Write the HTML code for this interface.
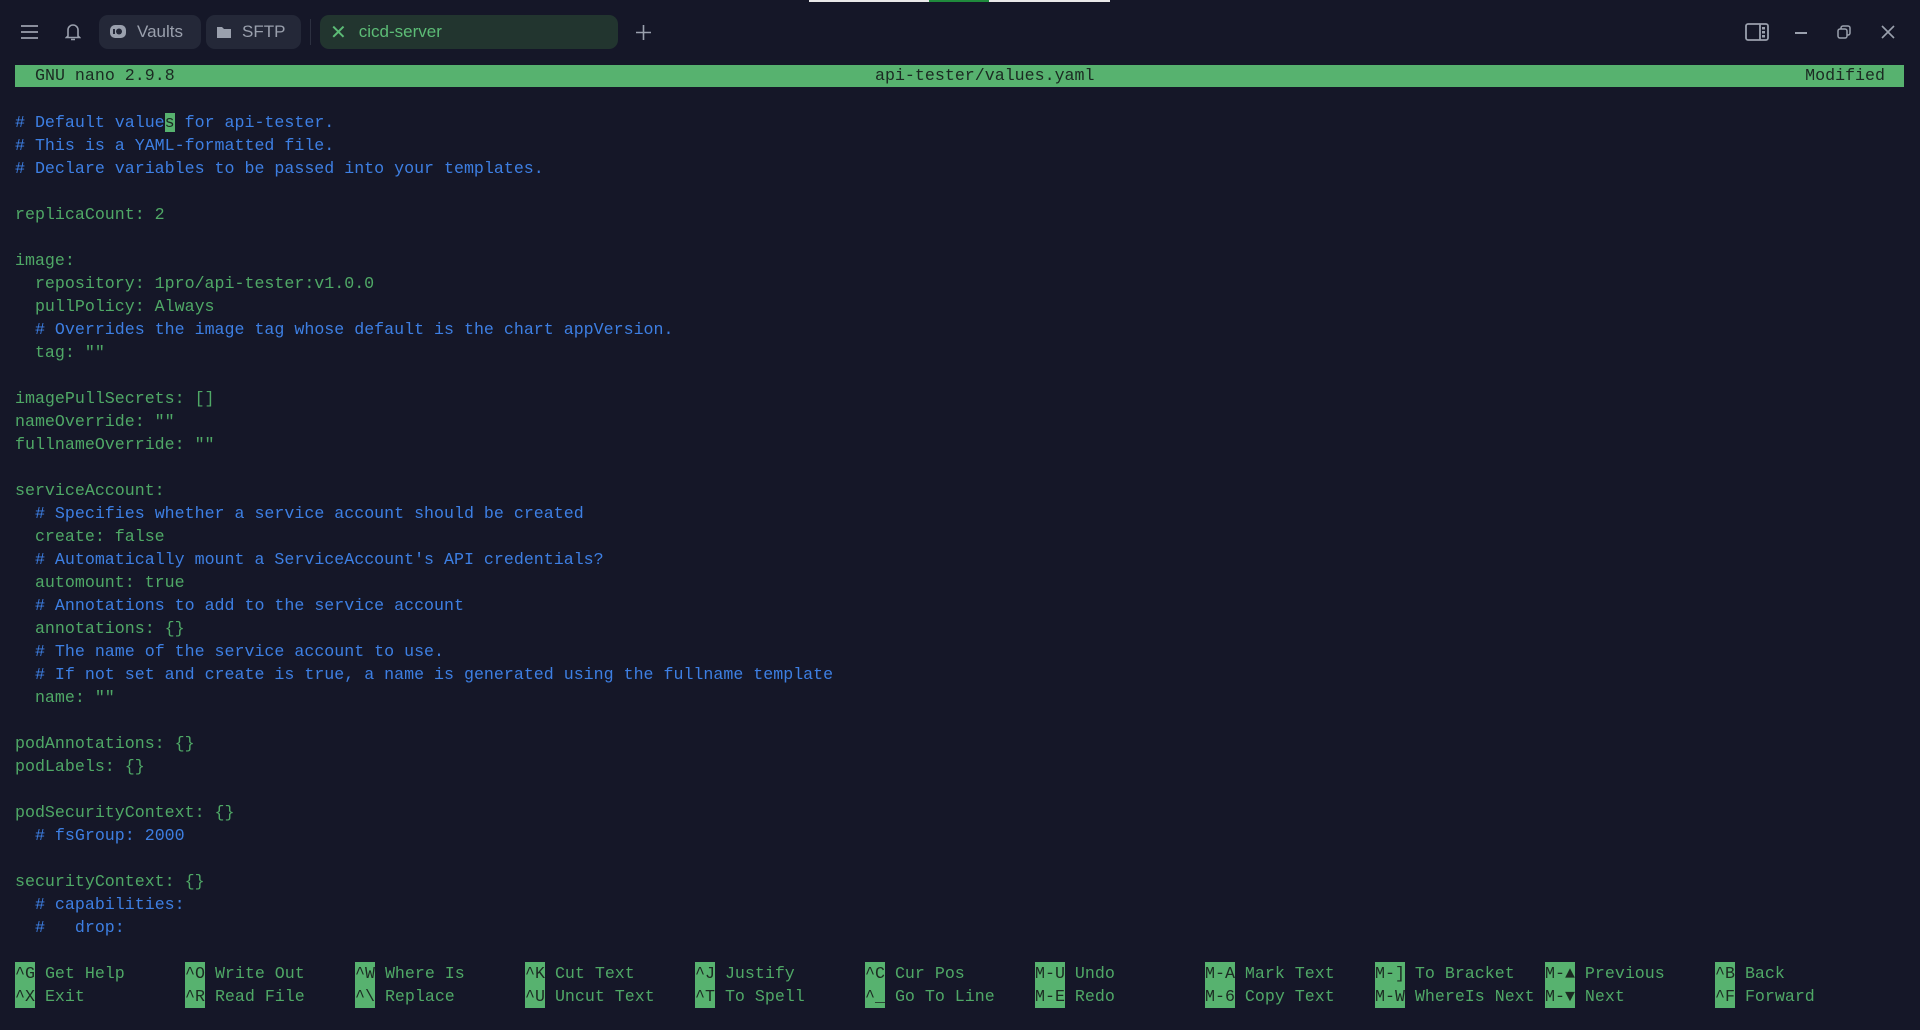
<!DOCTYPE html>
<html><head><meta charset="utf-8"><style>
*{margin:0;padding:0;box-sizing:border-box}
body{width:1920px;height:1030px;background:#151728;overflow:hidden;position:relative;font-family:"Liberation Sans",sans-serif}
.topline{position:absolute;top:0;left:809px;width:301px;height:2px;background:#e8e8e8}
.topline i{position:absolute;left:120px;width:60px;height:2px;background:#1f8a3c}
.tab{position:absolute;top:15px;height:34px;border-radius:9px;background:#242838;color:#9aa0ad;font-size:17px;display:flex;align-items:center}
.ic{position:absolute}
.mono{font-family:"Liberation Mono",monospace;font-size:16.64px;line-height:23px;white-space:pre}
.bar{position:absolute;left:15px;top:65px;width:1889px;height:22px;background:#57b26f;color:#1b2a22}
.bar span{position:absolute;top:0;line-height:22px}
pre.code{position:absolute;left:15px;top:88px;color:#4fa866}
.c{color:#3d7fe3}
.cur{background:#57b26f;color:#1b2a22}
.sc{position:absolute;color:#4fa866}
.k{background:#57b26f;color:#1b2a22;display:inline-block;height:23px;vertical-align:top}
</style></head><body>
<div class="topline"><i></i></div>
<svg class="ic" style="left:20px;top:24px" width="19" height="16" viewBox="0 0 19 16"><path d="M1 2H18M1 8H18M1 14H18" stroke="#9aa0ad" stroke-width="1.8"/></svg>
<svg class="ic" style="left:65px;top:22px" width="16" height="20" viewBox="0 0 16 20"><path d="M3 14V8a5 5 0 0 1 10 0v6l1.5 1.5h-13z M6 17.5h4" fill="none" stroke="#9aa0ad" stroke-width="1.6"/></svg>
<div class="tab" style="left:99px;width:102px"><svg style="margin-left:10px" width="18" height="18" viewBox="0 0 18 18"><rect x="1" y="2" width="16" height="13" rx="5" fill="#9aa0ad"/><circle cx="10" cy="8.5" r="3" fill="#242838"/><rect x="4" y="6" width="2" height="5" fill="#242838"/></svg><span style="margin-left:10px">Vaults</span></div>
<div class="tab" style="left:206px;width:95px"><svg style="margin-left:10px" width="16" height="14" viewBox="0 0 16 14"><path d="M1 2h5l2 2h7v9H1z" fill="#9aa0ad"/></svg><span style="margin-left:10px">SFTP</span></div>
<div style="position:absolute;left:310px;top:19px;width:1px;height:26px;background:#2c3040"></div>
<div class="tab" style="left:320px;width:298px;background:#22352f;color:#5cbc76"><span style="margin-left:10px;font-size:20px">✕</span><span style="margin-left:12px">cicd-server</span></div>
<svg class="ic" style="left:635px;top:24px" width="17" height="17" viewBox="0 0 17 17"><path d="M8.5 1v15M1 8.5h15" stroke="#9aa0ad" stroke-width="1.6"/></svg>
<svg class="ic" style="left:1745px;top:23px" width="24" height="18" viewBox="0 0 24 18"><rect x="1" y="1" width="22" height="16" rx="2" fill="none" stroke="#9aa0ad" stroke-width="1.8"/><path d="M15 1v16" stroke="#9aa0ad" stroke-width="1.8"/><rect x="17" y="4" width="3" height="2.5" fill="#9aa0ad"/><rect x="17" y="8" width="3" height="2.5" fill="#9aa0ad"/><rect x="17" y="12" width="3" height="2.5" fill="#9aa0ad"/></svg>
<div style="position:absolute;left:1795px;top:32px;width:12px;height:1.6px;background:#9aa0ad"></div>
<svg class="ic" style="left:1837px;top:25px" width="14" height="14" viewBox="0 0 14 14"><rect x="1" y="4" width="9" height="9" rx="2" fill="none" stroke="#9aa0ad" stroke-width="1.5"/><path d="M4 4V3a2 2 0 0 1 2-2h5a2 2 0 0 1 2 2v5a2 2 0 0 1-2 2h-1" fill="none" stroke="#9aa0ad" stroke-width="1.5"/></svg>
<svg class="ic" style="left:1881px;top:25px" width="14" height="14" viewBox="0 0 14 14"><path d="M1 1L13 13M13 1L1 13" stroke="#9aa0ad" stroke-width="1.6"/></svg>

<div class="bar mono"><span style="left:20px">GNU nano 2.9.8</span><span style="left:860px">api-tester/values.yaml</span><span style="right:19px">Modified</span></div>

<pre class="code mono">

<span class="c"># Default value<span class="cur">s</span> for api-tester.</span>
<span class="c"># This is a YAML-formatted file.</span>
<span class="c"># Declare variables to be passed into your templates.</span>

replicaCount: 2

image:
  repository: 1pro/api-tester:v1.0.0
  pullPolicy: Always
  <span class="c"># Overrides the image tag whose default is the chart appVersion.</span>
  tag: ""

imagePullSecrets: []
nameOverride: ""
fullnameOverride: ""

serviceAccount:
  <span class="c"># Specifies whether a service account should be created</span>
  create: false
  <span class="c"># Automatically mount a ServiceAccount's API credentials?</span>
  automount: true
  <span class="c"># Annotations to add to the service account</span>
  annotations: {}
  <span class="c"># The name of the service account to use.</span>
  <span class="c"># If not set and create is true, a name is generated using the fullname template</span>
  name: ""

podAnnotations: {}
podLabels: {}

podSecurityContext: {}
  <span class="c"># fsGroup: 2000</span>

securityContext: {}
  <span class="c"># capabilities:</span>
  <span class="c">#   drop:</span></pre>

<div class="sc mono" style="left:15px;top:962px"><span class="k">^G</span> Get Help
<span class="k">^X</span> Exit</div>
<div class="sc mono" style="left:185px;top:962px"><span class="k">^O</span> Write Out
<span class="k">^R</span> Read File</div>
<div class="sc mono" style="left:355px;top:962px"><span class="k">^W</span> Where Is
<span class="k">^\</span> Replace</div>
<div class="sc mono" style="left:525px;top:962px"><span class="k">^K</span> Cut Text
<span class="k">^U</span> Uncut Text</div>
<div class="sc mono" style="left:695px;top:962px"><span class="k">^J</span> Justify
<span class="k">^T</span> To Spell</div>
<div class="sc mono" style="left:865px;top:962px"><span class="k">^C</span> Cur Pos
<span class="k">^_</span> Go To Line</div>
<div class="sc mono" style="left:1035px;top:962px"><span class="k">M-U</span> Undo
<span class="k">M-E</span> Redo</div>
<div class="sc mono" style="left:1205px;top:962px"><span class="k">M-A</span> Mark Text
<span class="k">M-6</span> Copy Text</div>
<div class="sc mono" style="left:1375px;top:962px"><span class="k">M-]</span> To Bracket
<span class="k">M-W</span> WhereIs Next</div>
<div class="sc mono" style="left:1545px;top:962px"><span class="k">M-▲</span> Previous
<span class="k">M-▼</span> Next</div>
<div class="sc mono" style="left:1715px;top:962px"><span class="k">^B</span> Back
<span class="k">^F</span> Forward</div>
</body></html>
